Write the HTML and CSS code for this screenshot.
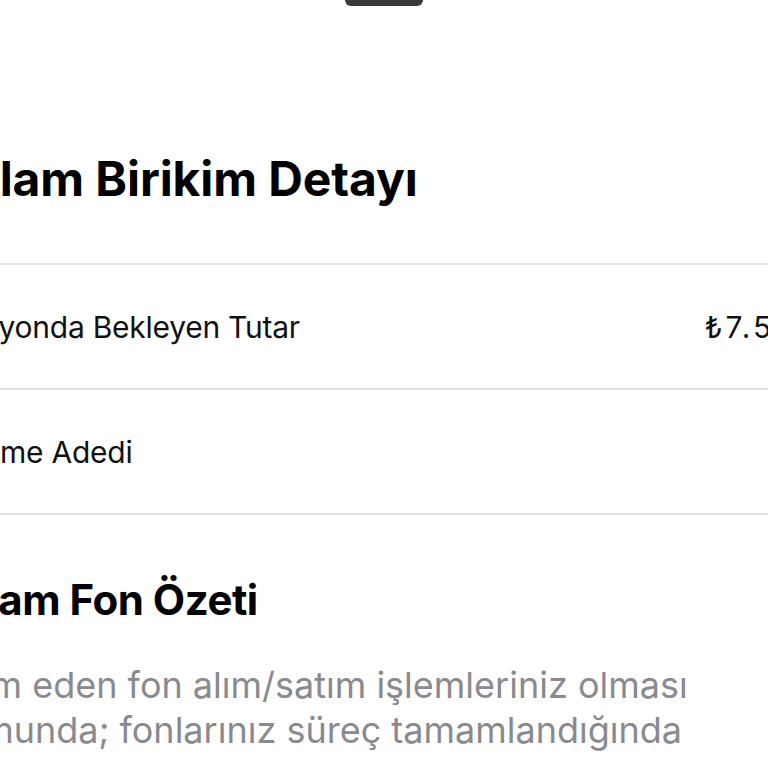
FILE: index.html
```html
<!DOCTYPE html>
<html lang="tr">
<head>
<meta charset="utf-8">
<title>Toplam Birikim Detayı</title>
<link rel="stylesheet" href="styles.css">
</head>
<body>
<div class="grabber"></div>
<main class="page">
  <h1 class="title">Toplam Birikim Detayı</h1>
  <ul class="list">
    <li class="row"><span class="label">Provizyonda Bekleyen Tutar</span><span class="value">₺7.500,00</span></li>
    <li class="row"><span class="label label-inset">Ödeme Adedi</span><span class="value">3</span></li>
  </ul>
  <h2 class="subtitle">Toplam Fon Özeti</h2>
  <p class="note">Devam eden fon alım/satım işlemleriniz olması durumunda; fonlarınız süreç tamamlandığında</p>
</main>
</body>
</html>
```
FILE: styles.css
```css
html, body {
  margin: 0;
  padding: 0;
  background: #ffffff;
  overflow: hidden;
  width: 768px;
  height: 768px;
}
body {
  font-family: Inter, "Noto Sans", sans-serif;
  color: #000;
}
.grabber {
  width: 78px;
  height: 12px;
  margin: -6px auto 0;
  border-radius: 6px;
  background: #3a3a3c;
}
.page {
  margin-left: -88px;
  width: 960px;
}
.title {
  margin: 141px 0 0;
  font-size: 48px;
  line-height: 64px;
  font-weight: 700;
  letter-spacing: -0.1px;
}
.list {
  list-style: none;
  margin: 52px 0 0;
  padding: 0;
  border-top: 2px solid #e2e2e4;
}
.row {
  display: flex;
  justify-content: space-between;
  align-items: center;
  height: 123px;
  border-bottom: 2px solid #e2e2e4;
  font-size: 30px;
  letter-spacing: -0.25px;
  color: #111;
}
.label-inset {
  padding-left: 30px;
}
.value {
  letter-spacing: 3px;
}
.subtitle {
  margin: 60px 0 0;
  font-size: 42px;
  line-height: 50px;
  font-weight: 700;
  letter-spacing: -0.5px;
}
.note {
  margin: 38px 0 0 -8px;
  width: 830px;
  font-size: 36px;
  line-height: 45px;
  color: #8a8a8e;
}
```
